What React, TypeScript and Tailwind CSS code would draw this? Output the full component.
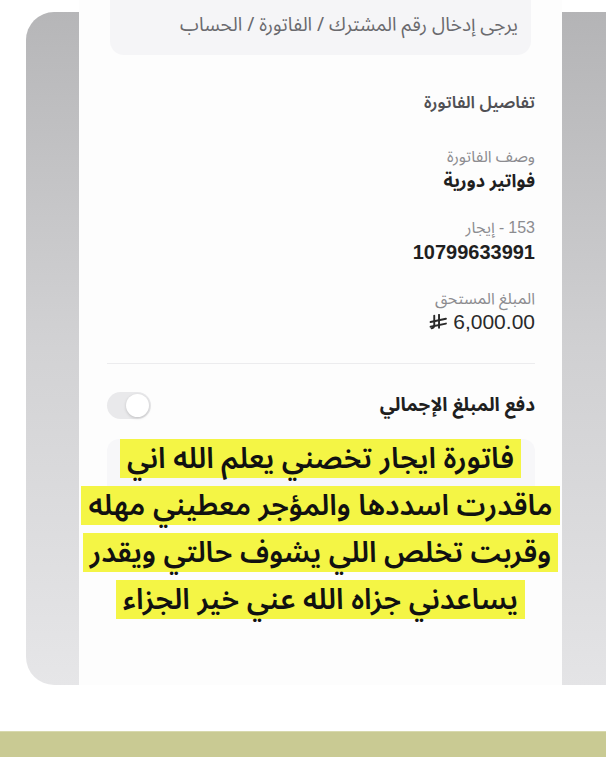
import React from "react";

const ar = { fontFamily: '"Noto Sans Arabic", "Noto Naskh Arabic", "DejaVu Sans", sans-serif' };
const num = { fontFamily: '"Liberation Sans", Arial, sans-serif' };

function RiyalIcon() {
  return (
    <svg width="19" height="17" viewBox="0 0 17 16" className="shrink-0">
      <g stroke="#2a2a2a" strokeWidth="1.8" fill="none" strokeLinecap="round">
        <path d="M4.5 1.5 V10.5 Q4.5 13 2 13.5" />
        <path d="M9 0.8 V13" />
        <path d="M1 7.5 L15.5 4.5" />
        <path d="M1 12 L15.5 9" />
      </g>
    </svg>
  );
}

function Field({ label, value, valueClass }: { label: React.ReactNode; value: React.ReactNode; valueClass?: string }) {
  return (
    <div className="flex flex-col items-start">
      <span className="text-[16px] leading-[22px] text-[#8c8c90]" style={ar}>{label}</span>
      <span className={valueClass ?? "text-[18px] leading-[26px] font-bold text-[#1f1f1f]"}>{value}</span>
    </div>
  );
}

const lines = [
  "فاتورة ايجار تخصني يعلم الله اني",
  "ماقدرت اسددها والمؤجر معطيني مهله",
  "وقربت تخلص اللي يشوف حالتي ويقدر",
  "يساعدني جزاه الله عني خير الجزاء",
];

export default function App() {
  return (
    <div className="w-[606px] h-[757px] bg-white flex flex-col overflow-hidden">
      <div className="flex items-end h-[685px] pl-[26px]">
        {/* left grey edge */}
        <div className="w-[53px] h-[673px] rounded-l-[28px] bg-gradient-to-b from-[#b6b6b8] via-[#d2d2d4] to-[#e6e6e8]" />

        {/* white phone panel */}
        <div dir="rtl" className="w-[483px] h-full bg-[#fdfdfd] flex flex-col" style={ar}>
          <div className="mx-[31px] h-[55px] rounded-b-[14px] bg-[#f5f5f7] flex items-center pr-[13px] pb-[4px]">
            <span className="text-[19px] text-[#6a6a6e]">يرجى إدخال رقم المشترك / الفاتورة / الحساب</span>
          </div>

          <div className="pr-[27px] pl-[28px] flex flex-col">
            <div className="mt-[36px] text-[17px] leading-[24px] font-semibold text-[#505054]">تفاصيل الفاتورة</div>

            <div className="mt-[31px]">
              <Field label="وصف الفاتورة" value="فواتير دورية" />
            </div>

            <div className="mt-[23px]">
              <Field
                label={<span><span style={num}>153</span> - إيجار</span>}
                value="10799633991"
                valueClass="text-[20px] leading-[26px] font-semibold text-[#1f1f1f] [font-family:'Liberation_Sans',Arial,sans-serif]"
              />
            </div>

            <div className="mt-[23px]">
              <Field
                label="المبلغ المستحق"
                value={
                  <span dir="ltr" className="flex items-center gap-[5px]">
                    <RiyalIcon />
                    <span style={num} className="text-[21px] font-normal text-[#2a2a2a]">6,000.00</span>
                  </span>
                }
                valueClass="leading-[24px]"
              />
            </div>

            <div className="mt-[29px] h-px bg-[#ececee]" />

            <div className="mt-[28px] flex items-center justify-between">
              <span className="text-[19px] leading-[27px] font-bold text-[#1f1f1f]">دفع المبلغ الإجمالي</span>
              <div className="w-[44px] h-[27px] rounded-full bg-[#e9e9eb] flex items-center justify-start px-[2px]">
                <div className="w-[23px] h-[23px] rounded-full bg-white shadow-[0_1px_3px_rgba(0,0,0,0.18)]" />
              </div>
            </div>
          </div>

          {/* highlighted caption over the input */}
          <div className="relative mt-[20px]">
            <div className="absolute top-0 left-[28px] right-[27px] h-[62px] rounded-[12px] bg-[#f7f7f9]" />
            <div className="relative flex flex-col items-center gap-[8px]">
              {lines.map((l) => (
                <span key={l} className="bg-[#f4f545] px-[7px] h-[39px] flex items-center text-[29px] leading-[39px] font-semibold text-[#111] whitespace-nowrap">
                  {l}
                </span>
              ))}
            </div>
          </div>
        </div>

        {/* right grey edge */}
        <div className="flex-1 h-[673px] bg-gradient-to-b from-[#b4b4b6] via-[#d0d0d2] to-[#e4e4e6]" />
      </div>

      <div className="flex-1" />
      <div className="h-[26px] bg-[#c9ca93] border-t border-[#d8d9ad]" />
    </div>
  );
}
